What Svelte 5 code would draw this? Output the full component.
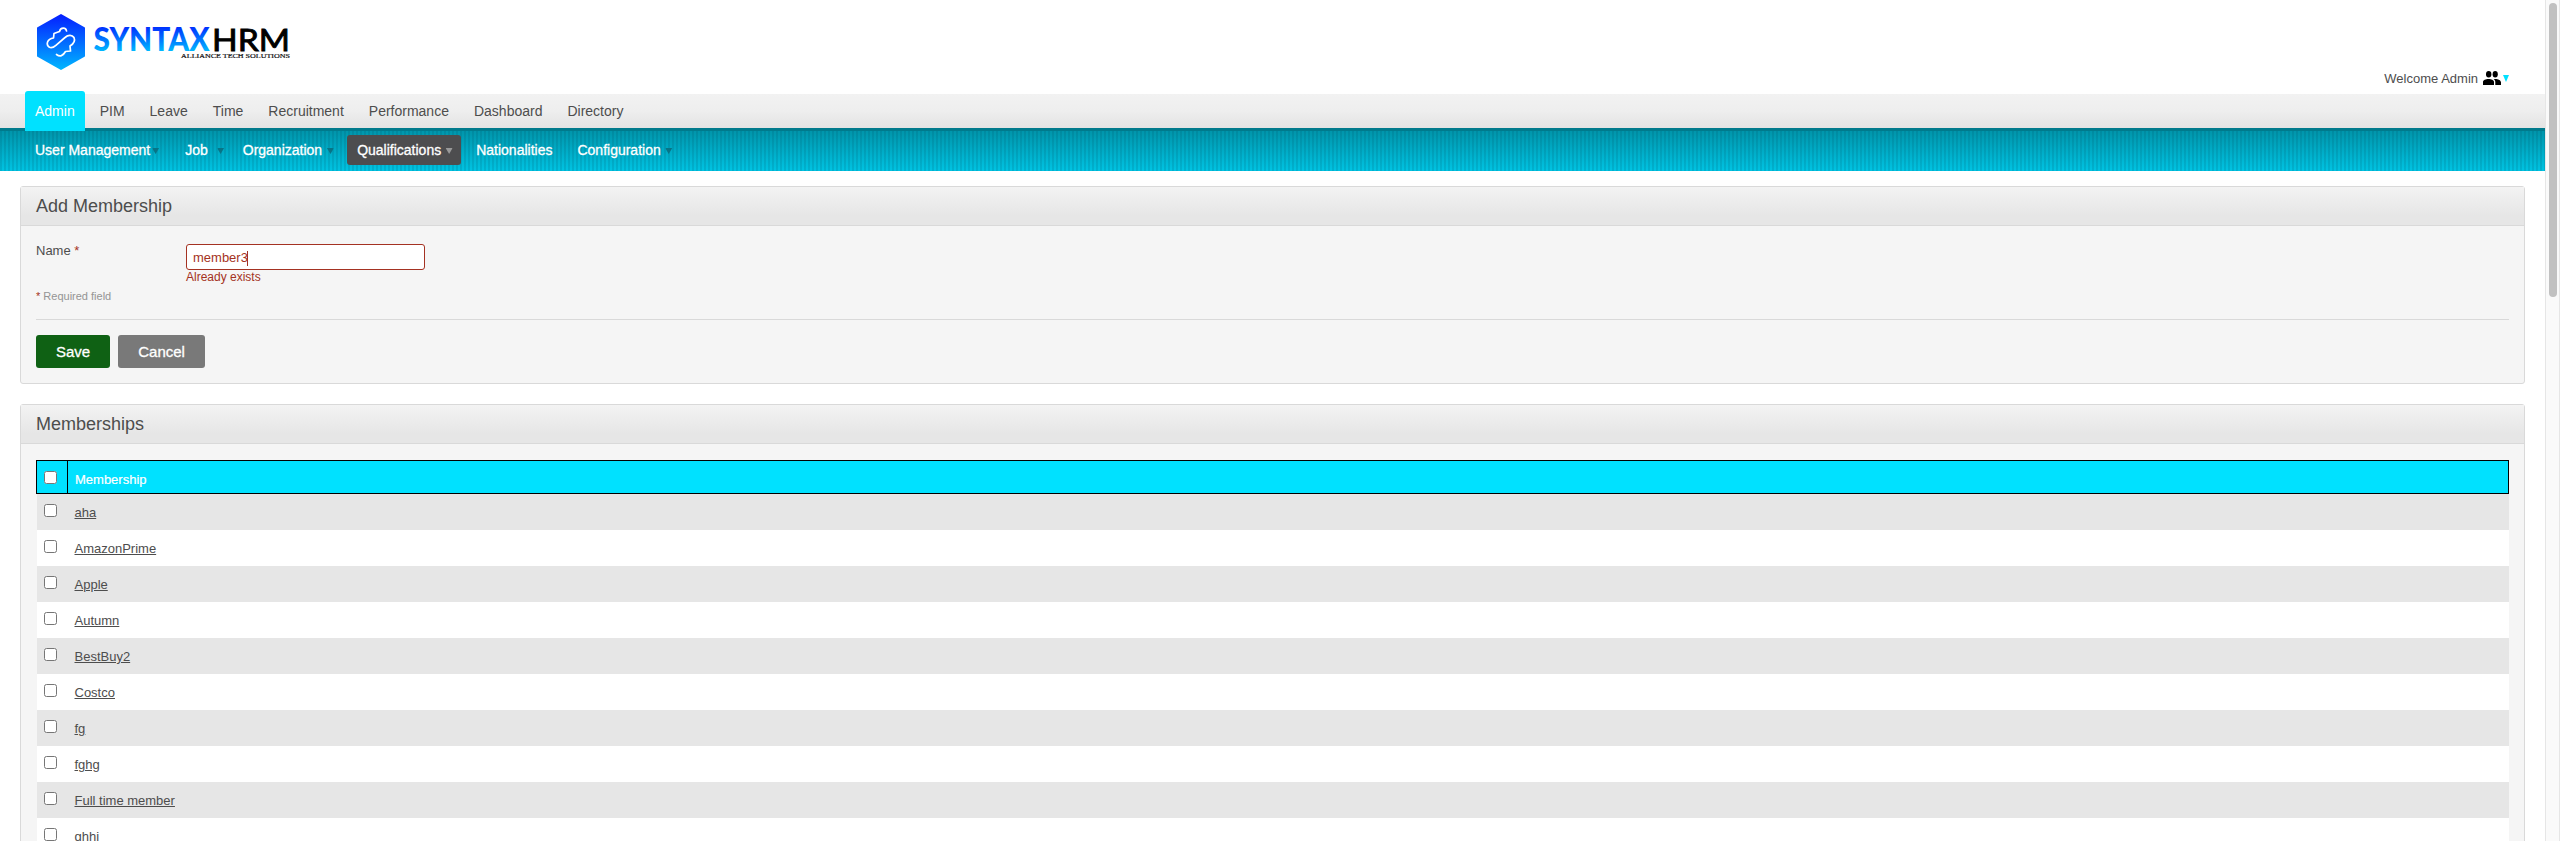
<script>
  const modules = ['Admin', 'PIM', 'Leave', 'Time', 'Recruitment', 'Performance', 'Dashboard', 'Directory'];
  const sections = [
    { label: 'User Management', menu: true },
    { label: 'Job', menu: true },
    { label: 'Organization', menu: true },
    { label: 'Qualifications', menu: true },
    { label: 'Nationalities', menu: false },
    { label: 'Configuration', menu: true }
  ];
  const memberships = ['aha', 'AmazonPrime', 'Apple', 'Autumn', 'BestBuy2', 'Costco', 'fg', 'fghg', 'Full time member', 'ghhi'];
</script>

<div class="window">
  <div class="page">
    <header>
      <svg class="logo" width="300" height="80" viewBox="0 0 300 80">
        <defs>
          <linearGradient id="hex" x1="0" y1="0" x2="0" y2="1">
            <stop offset="0" stop-color="#0520ff" />
            <stop offset="1" stop-color="#00b4ff" />
          </linearGradient>
          <linearGradient id="word" gradientUnits="userSpaceOnUse" x1="0" y1="27" x2="0" y2="51">
            <stop offset="0" stop-color="#0030ff" />
            <stop offset="1" stop-color="#00b8ff" />
          </linearGradient>
        </defs>
        <path d="M61 15L84 28V56L61 69L38 56V28Z" fill="url(#hex)" stroke="url(#hex)" stroke-width="2" stroke-linejoin="round" />
        <path d="M66.500 31C66 27 60.500 27 59.500 31.500L54 33.500L53.500 38C47 39 45.500 44.500 49.500 47.300C52.500 48.700 54.500 46.500 56.500 44.800L65 37.500C68 34.800 72 34.500 74 37.500C75.500 41 74 43.500 70 46L70.500 51L65.500 51.500C63 56 60 57 56.500 54.500" fill="none" stroke="#fff" stroke-width="1.700" stroke-linecap="round" stroke-linejoin="round" />
        <text x="93.500" y="51" font-family="Lato" font-weight="900" font-size="32.500" textLength="116" lengthAdjust="spacingAndGlyphs" fill="url(#word)">SYNTAX</text>
        <text x="212" y="51" font-family="Lato" font-weight="400" font-size="31.500" textLength="78" lengthAdjust="spacingAndGlyphs" fill="#000" stroke="#000" stroke-width=".9">HRM</text>
        <text x="181" y="58" font-family="Liberation Serif" font-weight="400" font-size="6.800" textLength="109" lengthAdjust="spacingAndGlyphs" fill="#111" stroke="#111" stroke-width=".2">ALLIANCE TECH SOLUTIONS</text>
      </svg>
      <div class="welcome">
        <span>Welcome Admin</span>
        <svg width="18" height="16" viewBox="0 0 18 16">
          <ellipse cx="5.700" cy="4.200" rx="2.700" ry="3.200" />
          <ellipse cx="12.200" cy="4.200" rx="2.600" ry="3.200" />
          <path d="M0 15V12C0 8 11 8 11 12V15ZM12.300 15V12C12.300 10.600 11.500 9.600 10.600 9C14 8.500 18 9.700 18 12.300V15Z" />
        </svg>
        <svg width="6" height="7" viewBox="0 0 6 7"><path d="M0 0H6L3 7Z" fill="#00e1ff" /></svg>
      </div>
    </header>
    <nav class="modules">
      {#each modules as item, i}<a class:current={i === 0}>{item}</a>{/each}
    </nav>
    <nav class="sections">
      {#each sections as item}
        <a class:menu={item.menu} class:current={item.label === 'Qualifications'}>{item.label}{#if item.menu}<i></i>{/if}</a>
      {/each}
    </nav>
    <main>
      <section>
        <h1>Add Membership</h1>
        <div class="form">
          <div class="field">
            <span class="label">Name <em>*</em></span>
            <div class="entry">
              <div class="input">member3<b></b></div>
              <span class="error">Already exists</span>
            </div>
          </div>
          <p class="required"><em>*</em> Required field</p>
          <div class="actions"><button class="save">Save</button><button>Cancel</button></div>
        </div>
      </section>
      <section>
        <h1>Memberships</h1>
        <div class="list">
          <div class="head"><span class="tick"><input type="checkbox" /></span><span class="title">Membership</span></div>
          {#each memberships as name}
            <div class="row"><span class="tick"><input type="checkbox" /></span><a>{name}</a></div>
          {/each}
        </div>
      </section>
    </main>
  </div>
  <aside><div class="thumb"></div></aside>
</div>

<style>
  :global(body) { overflow: hidden; background: #fff; }
  .window { display: flex; height: 841px; overflow: hidden; font: 13px/16px "Liberation Sans", Arial, sans-serif; color: #4d4d4d; }
  .page { width: 2545px; flex: none; overflow: hidden; }
  header { height: 94px; display: flex; justify-content: space-between; }
  svg { display: block; }
  .welcome { display: flex; align-items: flex-start; padding: 70px 36px 0 0; }
  .welcome span { margin: 1px 5px 0 0; }
  .welcome svg + svg { margin: 5px 0 0 2px; }

  .modules { height: 34px; display: flex; gap: 5px; padding-left: 25px; background: linear-gradient(#f2f2f2, #eee 50%, #e3e3e3); font-size: 14px; }
  .modules a { height: 34px; padding: 0 10px; line-height: 35px; }
  .modules .current { position: relative; z-index: 1; height: 37px; margin-top: -3px; border-bottom: 3px solid #00e1ff; border-radius: 3px 3px 0 0; background: #00e1ff; color: #fff; line-height: 41px; }
  .sections { box-sizing: border-box; height: 43px; display: flex; gap: 5px; padding: 4px 0 0 25px; border-top: 3px solid #007a8c; background: repeating-linear-gradient(90deg, rgba(0, 60, 80, .13) 0 2px, transparent 2px 4px), linear-gradient(#0095ab, #00c3e2); font-size: 14px; color: #fff; -webkit-text-stroke: .3px #fff; }
  .sections a { position: relative; height: 30px; padding: 0 10px; border-radius: 3px; line-height: 30px; }
  .sections .menu { padding-right: 20px; }
  .sections .current { background: #4d4d4f; }
  .sections i { position: absolute; left: 92%; top: 13px; width: 7px; height: 6px; transform: translateX(-92%); background: #087486; clip-path: polygon(0 0, 100% 0, 50% 100%); }
  .sections .current i { background: #999; }

  main { padding: 15px 20px 0; }
  section { box-sizing: border-box; margin-bottom: 20px; border: 1px solid #d9d9d9; border-radius: 3px; background: #f5f5f5; }
  h1 { height: 38px; margin: 0; padding-left: 15px; border-bottom: 1px solid #d9d9d9; background: linear-gradient(#f3f3f3, #e6e6e6 75%); font-size: 18px; font-weight: 400; line-height: 38px; }
  em { color: #a43222; font-style: normal; }
  .form { padding: 18px 15px 15px; }
  .field { display: flex; height: 45px; }
  .label { width: 150px; margin-top: -1px; }
  .input { box-sizing: border-box; display: flex; align-items: center; width: 239px; height: 26px; padding: 2px 0 0 6px; border: 1px solid #a43222; border-radius: 3px; background: #fff; color: #a43222; }
  .input b { width: 1px; height: 15px; margin-left: -1px; background: #a43222; }
  .error { display: block; font-size: 12px; line-height: 14px; color: #a43222; }
  .required { margin: 0; height: 30px; border-bottom: 1px solid #d9d9d9; font-size: 11px; line-height: 14px; color: #949494; }
  .actions { display: flex; gap: 8px; padding-top: 15px; }
  button { height: 33px; padding: 0 20px; border: 0; border-radius: 3px; background: #797979; color: #fff; font: 15px "Liberation Sans", Arial, sans-serif; -webkit-text-stroke: .3px #fff; }
  .save { background: #0f6114; }

  .list { padding: 16px 15px 0; }
  .head { box-sizing: border-box; display: flex; height: 34px; border: 1px solid #000; background: #00e1ff; color: #fff; -webkit-text-stroke: .2px #fff; }
  .tick { box-sizing: border-box; flex: none; width: 30px; padding: 10px 0 0 7px; }
  .tick input { display: block; width: 13px; height: 13px; margin: 0; }
  .title { padding: 11px 0 0 7px; border-left: 1px solid #000; }
  .row { display: flex; height: 36px; margin-left: 1px; background: #fff; }
  .row:nth-child(even) { background: #e6e6e6; }
  .row a { padding: 11px 0 0 7.500px; text-decoration: underline; }

  aside { box-sizing: border-box; width: 15px; padding: 3px 0 0 3px; border: solid #e6e6e6; border-width: 0 1px; background: #fafafa; }
  .thumb { width: 8px; height: 294px; border-radius: 4px; background: #c1c1c1; }
</style>
